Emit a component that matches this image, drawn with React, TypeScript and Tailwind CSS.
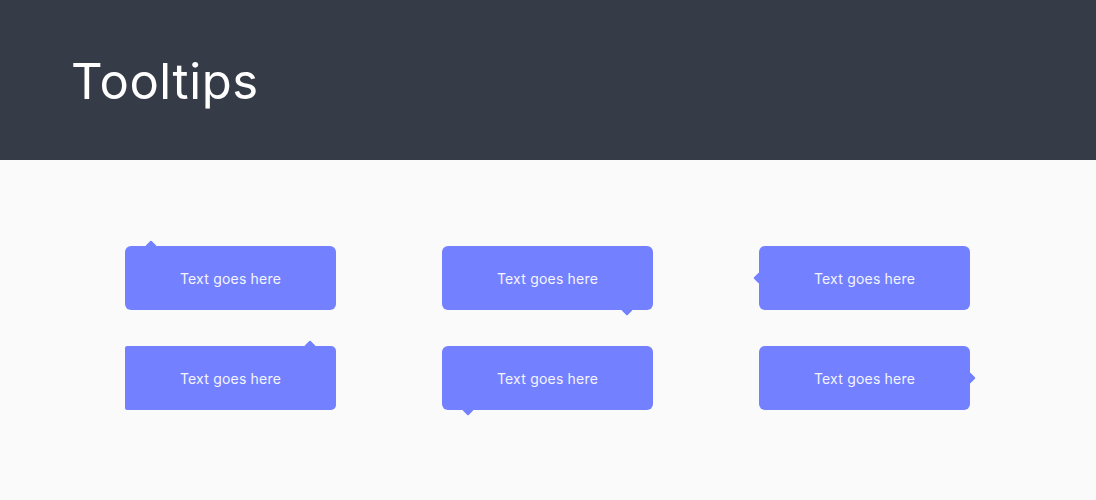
import React from "react";

type Side = "top-left" | "top-right" | "bottom-left" | "bottom-right" | "left" | "right";

const arrowClass: Record<Side, string> = {
    "top-left": "left-[22px] -top-[4px]",
    "top-right": "right-[22px] -top-[4px]",
    "bottom-left": "left-[22px] -bottom-[4px]",
    "bottom-right": "right-[22px] -bottom-[4px]",
    "left": "-left-[4px] top-1/2 -mt-[4px]",
    "right": "-right-[4px] top-1/2 -mt-[4px]",
};

function Tooltip({side, square}: { side: Side; square?: boolean }) {
    return (
        <div
            className={`relative flex h-[64px] w-[211px] items-center justify-center bg-[#7380ff] ${square ? "rounded-r-[5px] rounded-l-[2px]" : "rounded-[6px]"}`}>
            <span className={`absolute h-[8px] w-[8px] rotate-45 rounded-[1px] bg-[#7380ff] ${arrowClass[side]}`}/>
            <span className="relative text-[14px] tracking-[0.2px] text-[#f4f5ff]">Text goes here</span>
        </div>
    );
}

export default function App() {
    return (
        <div className="min-h-[500px] bg-[#fafafa]" style={{fontFamily: "Inter, 'Noto Sans', sans-serif"}}>
            <header className="flex h-[160px] items-center bg-[#363c47] px-[71px]">
                <h1 className="pt-[3px] text-[49px] font-normal tracking-[0.6px] text-white">Tooltips</h1>
            </header>
            <main className="grid grid-cols-[211px_211px_211px] gap-x-[106px] gap-y-[36px] pl-[125px] pt-[86px]">
                <Tooltip side="top-left"/>
                <Tooltip side="bottom-right"/>
                <Tooltip side="left"/>
                <Tooltip side="top-right" square/>
                <Tooltip side="bottom-left"/>
                <Tooltip side="right"/>
            </main>
        </div>
    );
}
